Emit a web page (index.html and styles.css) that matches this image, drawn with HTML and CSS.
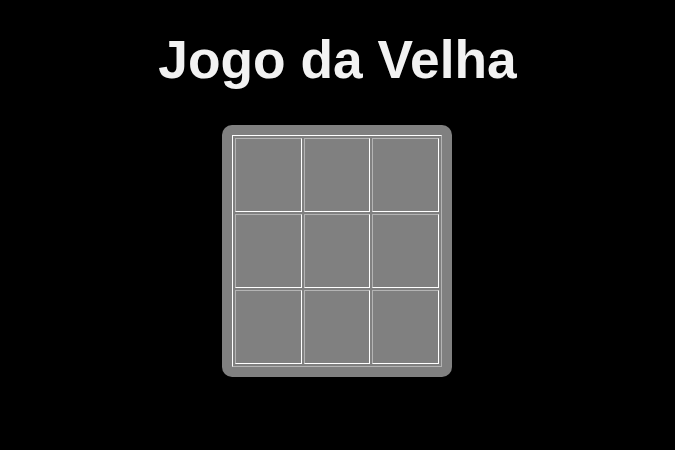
FILE: index.html
```html
<!DOCTYPE html>
<html lang="pt">
<head>
<meta charset="utf-8">
<title>Jogo da Velha</title>
<link rel="stylesheet" href="styles.css">
</head>
<body>
<h1 class="title">Jogo da Velha</h1>
<div class="board">
  <table class="grid">
    <tr><td></td><td></td><td></td></tr>
    <tr><td></td><td></td><td></td></tr>
    <tr><td></td><td></td><td></td></tr>
  </table>
</div>
</body>
</html>
```
FILE: styles.css
```css
html, body {
  margin: 0;
  padding: 0;
  background: #000;
  height: 100%;
}
body {
  display: flex;
  flex-direction: column;
  align-items: center;
  font-family: "Liberation Sans", Arial, sans-serif;
}
.title {
  margin: 28px 0 0;
  color: #f2f2f2;
  font-size: 53.3px;
  font-weight: bold;
  line-height: 64px;
}
.board {
  margin-top: 33px;
  margin-right: 1px;
  background: #808080;
  border-radius: 10px;
  padding: 10px;
}
.grid {
  width: 210px;
  table-layout: fixed;
  border-collapse: separate;
  border-spacing: 2px;
  border: 1px solid;
  border-color: #fff #b4b4b4 #b4b4b4 #fff;
}
.grid td {
  height: 72px;
  padding: 0;
  border: 1px solid;
  border-color: #b4b4b4 #fff #fff #b4b4b4;
  background: #808080;
}
```
